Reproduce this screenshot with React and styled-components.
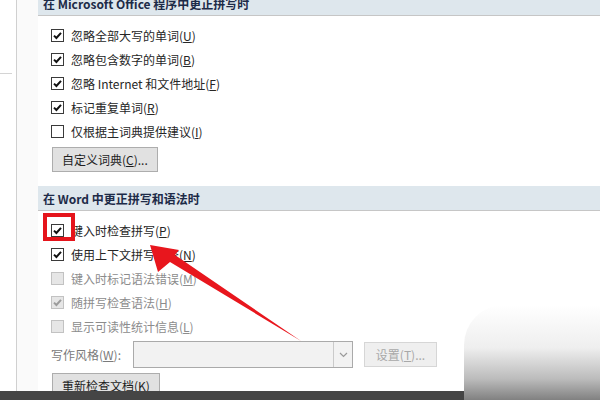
import React from 'react';
import styled, { createGlobalStyle } from 'styled-components';

const Global = createGlobalStyle`
  html, body {
    margin: 0;
    padding: 0;
    background: #fff;
  }
  body {
    font-family: "Noto Sans CJK SC", "Noto Sans", "Liberation Sans", sans-serif;
  }
`

const Page = styled.div`
  width: 600px;
  height: 400px;
  position: relative;
  overflow: hidden;
  display: flex;
  flex-direction: column;
  background: #fff;
`

const Body = styled.div`
  height: 391px;
  flex-shrink: 0;
  display: flex;
  overflow: hidden;
`

const Side = styled.div`
  width: 38px;
  display: flex;
`

const SideEdge = styled.div`
  width: 16px;
  background: #fff;
`

const SideTick = styled.div`
  margin-top: 73px;
  width: 12px;
  height: 1px;
  background: #d4d4d4;
`

const SideLine = styled.div`
  width: 1px;
  background: #d0d0d0;
`

const SideFill = styled.div`
  flex: 1;
  background: #fafafa;
`

const Main = styled.div`
  flex: 1;
  display: flex;
  flex-direction: column;
  margin-top: -9px;

  & > * {
    flex-shrink: 0;
  }
`

const SectionHeader = styled.div`
  height: 24px;
  border-bottom: 1px solid #c6c6c6;
  background: #dee7ed;
  padding-left: 5px;
  display: flex;
  align-items: center;
  font-size: 12px;
  font-weight: bold;
  color: #1d2b48;
  white-space: nowrap;
`

const Section = styled.div`
  display: flex;
  flex-direction: column;
  align-items: flex-start;
  padding: 7px 0 0 13px;

  & > * {
    flex-shrink: 0;
  }
`

const Row = styled.div`
  height: 24px;
  display: flex;
  align-items: center;
  gap: 7px;
  font-size: 12px;
  color: ${p => (p.disabled ? '#8c8c8c' : '#262626')};
  white-space: nowrap;
`

const Box = styled.span`
  width: 13px;
  height: 13px;
  box-sizing: border-box;
  border: 1px solid ${p => (p.disabled ? '#c2c2c2' : '#3a3a3a')};
  background: ${p => (p.disabled ? '#e6e6e6' : '#fff')};
  display: flex;
  align-items: center;
  justify-content: center;
`

const Key = styled.span`
  text-decoration: underline;
  text-underline-offset: 1px;
`

const Button = styled.div`
  height: 25px;
  box-sizing: border-box;
  margin: ${p => p.mt || 0}px 0 0 1px;
  padding: 0 9px;
  border: 1px solid #adadad;
  background: #e1e1e1;
  display: flex;
  align-items: center;
  font-size: 12px;
  color: #1e1e1e;
  white-space: nowrap;
`

const Spacer = styled.div`
  height: ${p => p.h}px;
`

const StyleRow = styled.div`
  height: 27px;
  margin-top: 3px;
  display: flex;
  align-items: center;
  font-size: 12px;
  color: #7a7a7a;
  white-space: nowrap;
`

const Label = styled.span`
  width: 82px;
`

const Select = styled.div`
  width: 220px;
  height: 27px;
  box-sizing: border-box;
  border: 1px solid #aaaaaa;
  background: #f2f2f2;
  display: flex;
  justify-content: flex-end;
`

const Drop = styled.div`
  width: 18px;
  border-left: 1px solid #cacaca;
  display: flex;
  align-items: center;
  justify-content: center;
`

const GhostButton = styled.div`
  width: 73px;
  height: 25px;
  box-sizing: border-box;
  margin-left: 11px;
  border: 1px solid #d6d6d6;
  background: #efefef;
  color: #a8a8a8;
  font-size: 12px;
  display: flex;
  align-items: center;
  justify-content: center;
`

const Bottom = styled.div`
  height: 9px;
  flex-shrink: 0;
  display: flex;
`

const DarkBar = styled.div`
  width: 464px;
  background: #454545;
`

const Shade = styled.div`
  position: absolute;
  right: 0;
  bottom: 0;
  width: 136px;
  height: 95px;
  border-top-left-radius: 40px;
  background: linear-gradient(
    to bottom,
    rgba(120, 120, 120, 0) 0%,
    rgba(120, 120, 120, 0.12) 45%,
    rgba(120, 120, 120, 0.5) 78%,
    rgba(115, 115, 115, 0.9) 100%
  );
`

const RedBox = styled.div`
  position: absolute;
  left: 43px;
  top: 213px;
  width: 32px;
  height: 28px;
  box-sizing: border-box;
  border: 4px solid #e5141b;
`

const ArrowLayer = styled.svg`
  position: absolute;
  left: 0;
  top: 0;
  pointer-events: none;
`

const Tick = ({ disabled }) => (
  <svg width="11" height="11" viewBox="0 0 11 11">
    <path
      d="M2 5.6 L4.4 8 L9 2.8"
      fill="none"
      stroke={disabled ? '#9c9c9c' : '#111'}
      strokeWidth="2"
    />
  </svg>
)

const Check = ({ checked, disabled, text, k }) => (
  <Row disabled={disabled}>
    <Box disabled={disabled}>{checked && <Tick disabled={disabled} />}</Box>
    <span>
      {text}(<Key>{k}</Key>)
    </span>
  </Row>
)

const officeItems = [
  { text: '忽略全部大写的单词', k: 'U', checked: true },
  { text: '忽略包含数字的单词', k: 'B', checked: true },
  { text: '忽略 Internet 和文件地址', k: 'F', checked: true },
  { text: '标记重复单词', k: 'R', checked: true },
  { text: '仅根据主词典提供建议', k: 'I', checked: false },
]

const wordItems = [
  { text: '键入时检查拼写', k: 'P', checked: true },
  { text: '使用上下文拼写检查', k: 'N', checked: true },
  { text: '键入时标记语法错误', k: 'M', checked: false, disabled: true },
  { text: '随拼写检查语法', k: 'H', checked: true, disabled: true },
  { text: '显示可读性统计信息', k: 'L', checked: false, disabled: true },
]

export default function App() {
  return (
    <Page>
      <Global />
      <Body>
        <Side>
          <SideEdge>
            <SideTick />
          </SideEdge>
          <SideLine />
          <SideFill />
        </Side>
        <Main>
          <SectionHeader>在 Microsoft Office 程序中更正拼写时</SectionHeader>
          <Section>
            {officeItems.map(v => (
              <Check key={v.k} {...v} />
            ))}
            <Button mt={4}>
              自定义词典(<Key>C</Key>)...
            </Button>
          </Section>
          <Spacer h={14} />
          <SectionHeader>在 Word 中更正拼写和语法时</SectionHeader>
          <Section>
            {wordItems.map(v => (
              <Check key={v.k} {...v} />
            ))}
            <StyleRow>
              <Label>
                写作风格(<Key>W</Key>):
              </Label>
              <Select>
                <Drop>
                  <svg width="9" height="6" viewBox="0 0 9 6">
                    <path d="M1 1 L4.5 4.5 L8 1" fill="none" stroke="#9a9a9a" strokeWidth="1.2" />
                  </svg>
                </Drop>
              </Select>
              <GhostButton>
                设置(<Key>T</Key>)...
              </GhostButton>
            </StyleRow>
            <Button mt={5}>
              重新检查文档(<Key>K</Key>)
            </Button>
          </Section>
        </Main>
      </Body>
      <Bottom>
        <DarkBar />
      </Bottom>
      <Shade />
      <RedBox />
      <ArrowLayer width="600" height="400" viewBox="0 0 600 400">
        <polygon
          points="150,245 179,250 175,255 301,341 170,262 158,272"
          fill="#e8161d"
        />
      </ArrowLayer>
    </Page>
  )
}
